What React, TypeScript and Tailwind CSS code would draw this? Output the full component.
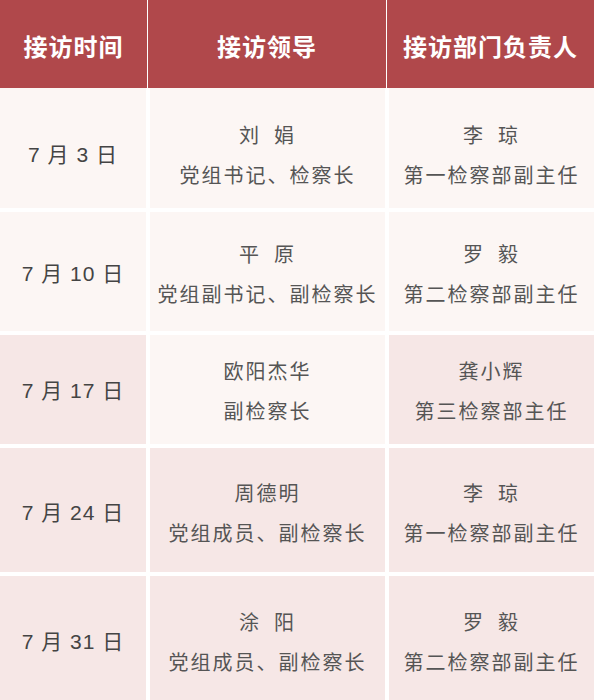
import React from "react";

const L = "bg-[#fcf6f4]";
const P = "bg-[#f6e7e6]";

type Row = {
  date: string;
  name: string;
  title: string;
  dept: string;
  deptTitle: string;
  bg: [string, string, string];
  h: string;
  pad?: string;
};

const rows: Row[] = [
  { date: "7 月 3 日", name: "刘  娟", title: "党组书记、检察长", dept: "李  琼", deptTitle: "第一检察部副主任", bg: [L, L, L], h: "h-[120px]", pad: "pt-[14px]" },
  { date: "7 月 10 日", name: "平  原", title: "党组副书记、副检察长", dept: "罗  毅", deptTitle: "第二检察部副主任", bg: [L, L, L], h: "h-[119px]", pad: "pt-[4px]" },
  { date: "7 月 17 日", name: "欧阳杰华", title: "副检察长", dept: "龚小辉", deptTitle: "第三检察部主任", bg: [P, L, P], h: "h-[109px]", pad: "pt-[2px]" },
  { date: "7 月 24 日", name: "周德明", title: "党组成员、副检察长", dept: "李  琼", deptTitle: "第一检察部副主任", bg: [P, P, P], h: "h-[124px]", pad: "pt-[6px]" },
  { date: "7 月 31 日", name: "涂  阳", title: "党组成员、副检察长", dept: "罗  毅", deptTitle: "第二检察部副主任", bg: [P, P, P], h: "h-[125px]", pad: "pt-[6px]" },
];

const font = { fontFamily: '"Noto Sans CJK SC", "Noto Sans", sans-serif' };

export default function App() {
  return (
    <div className="w-[594px] h-[700px] bg-white overflow-hidden" style={font}>
      <div className="grid grid-cols-[147px_238px_207px] gap-x-px bg-white">
        {["接访时间", "接访领导", "接访部门负责人"].map((t) => (
          <div
            key={t}
            className="h-[88px] bg-[#b0484b] flex items-center justify-center pt-[4px] text-white text-[24px] font-bold tracking-[1px] leading-none"
          >
            {t}
          </div>
        ))}
      </div>
      <div className="flex flex-col gap-y-[4px]">
        {rows.map((r, i) => (
          <div key={i} className={`grid grid-cols-[146px_235px_205px] gap-x-[4px] ${r.h}`}>
            <div
              className={`${r.bg[0]} ${r.pad ?? ""} flex items-center justify-center text-[21px] text-[#444] leading-[40px] tracking-[1px] whitespace-pre`}
              style={{ fontFamily: '"Liberation Sans", "Noto Sans CJK SC", sans-serif' }}
            >
              {r.date}
            </div>
            <div className={`${r.bg[1]} ${r.pad ?? ""} flex flex-col items-center justify-center text-[20px] text-[#555] leading-[40px] tracking-[2px] whitespace-pre`}>
              <div>{r.name}</div>
              <div>{r.title}</div>
            </div>
            <div className={`${r.bg[2]} ${r.pad ?? ""} flex flex-col items-center justify-center text-[20px] text-[#555] leading-[40px] tracking-[2px] whitespace-pre`}>
              <div>{r.dept}</div>
              <div>{r.deptTitle}</div>
            </div>
          </div>
        ))}
      </div>
    </div>
  );
}
